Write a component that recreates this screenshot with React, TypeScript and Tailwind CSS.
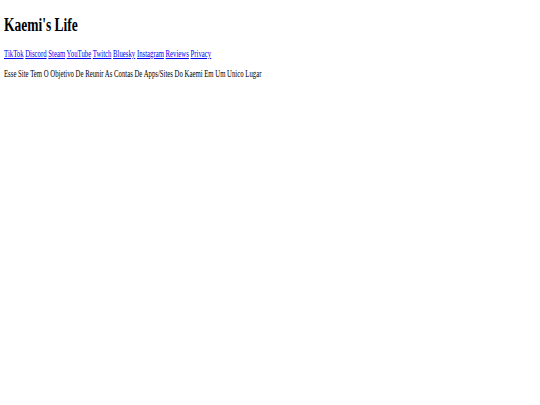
const links = ['TikTok', 'Discord', 'Steam', 'YouTube', 'Twitch', 'Bluesky', 'Instagram', 'Reviews', 'Privacy'];

export default function App() {
  return (
    <div className="min-h-screen bg-white px-[4px] pt-[3px] text-black font-['Liberation_Serif',serif]">
      {/* the page is drawn narrow: text is squeezed horizontally */}
      <h1 className="mt-[12px] mb-[12px] text-[18px] leading-[21px] font-bold origin-left scale-x-75">
        Kaemi's Life
      </h1>
      <nav className="my-[9px] text-[10px] leading-[11px] origin-left scale-x-[0.675]">
        {links.map((l, i) => (
          <span key={l}>
            <a href="#" className="text-[#0000ee] underline">{l}</a>
            {i < links.length - 1 ? ' ' : ''}
          </span>
        ))}
      </nav>
      <p className="my-[9px] text-[10px] leading-[11px] origin-left scale-x-[0.675]">
        Esse Site Tem O Objetivo De Reunir As Contas De Apps/Sites Do Kaemi Em Um Unico Lugar
      </p>
    </div>
  );
}
